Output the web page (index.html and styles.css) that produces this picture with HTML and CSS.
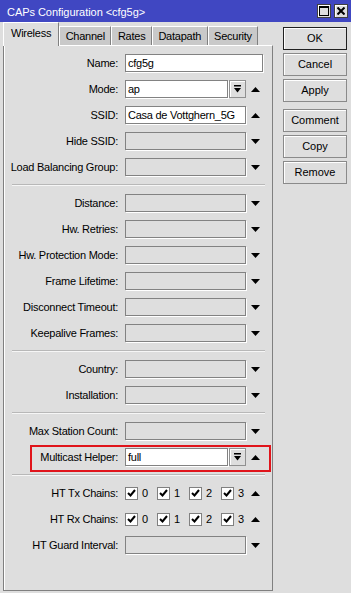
FILE: index.html
```
<!DOCTYPE html>
<html>
<head>
    <title>CAPs Configuration</title>
    <link rel="stylesheet" href="styles.css">
</head>
<body>
    <div class="titlebar">
        <span class="title">CAPs Configuration &lt;cfg5g&gt;</span>
        <div class="winbtns">
            <span class="winbtn"><svg width="10" height="10" viewBox="0 0 10 10"><rect x="0.5" y="0.5" width="9" height="9" fill="none" stroke="#000"/><rect x="0" y="0" width="10" height="2" fill="#000"/></svg></span>
            <span class="winbtn"><svg width="8" height="8" viewBox="0 0 8 8"><path d="M0.5 0.5 L7.5 7.5 M7.5 0.5 L0.5 7.5" stroke="#000" stroke-width="2"/></svg></span>
        </div>
    </div>

    <div class="main">
        <div class="left">
            <div class="tabs">
                <div class="tab active">Wireless</div>
                <div class="tab">Channel</div>
                <div class="tab">Rates</div>
                <div class="tab">Datapath</div>
                <div class="tab">Security</div>
            </div>

            <div class="panel">
                <div class="row"><label>Name:</label><div class="field text wide">cfg5g</div></div>
                <div class="row">
                    <label>Mode:</label><div class="field text short">ap</div>
                    <span class="dropbtn"><svg width="7" height="8" viewBox="0 0 7 8"><rect x="0" y="0" width="7" height="1.5" fill="#000"/><path d="M0 3 H7 L3.5 7.5 Z" fill="#000"/></svg></span>
                    <svg class="arrow" width="9" height="5" viewBox="0 0 9 5"><path d="M0 5 H9 L4.5 0 Z" fill="#000"/></svg>
                </div>
                <div class="row">
                    <label>SSID:</label><div class="field text">Casa de Vottghern_5G</div>
                    <svg class="arrow" width="9" height="5" viewBox="0 0 9 5"><path d="M0 5 H9 L4.5 0 Z" fill="#000"/></svg>
                </div>
                <div class="row">
                    <label>Hide SSID:</label><div class="field"></div>
                    <svg class="arrow" width="9" height="5" viewBox="0 0 9 5"><path d="M0 0 H9 L4.5 5 Z" fill="#000"/></svg>
                </div>
                <div class="row">
                    <label>Load Balancing Group:</label><div class="field"></div>
                    <svg class="arrow" width="9" height="5" viewBox="0 0 9 5"><path d="M0 0 H9 L4.5 5 Z" fill="#000"/></svg>
                </div>

                <div class="sep"></div>

                <div class="row">
                    <label>Distance:</label><div class="field"></div>
                    <svg class="arrow" width="9" height="5" viewBox="0 0 9 5"><path d="M0 0 H9 L4.5 5 Z" fill="#000"/></svg>
                </div>
                <div class="row">
                    <label>Hw. Retries:</label><div class="field"></div>
                    <svg class="arrow" width="9" height="5" viewBox="0 0 9 5"><path d="M0 0 H9 L4.5 5 Z" fill="#000"/></svg>
                </div>
                <div class="row">
                    <label>Hw. Protection Mode:</label><div class="field"></div>
                    <svg class="arrow" width="9" height="5" viewBox="0 0 9 5"><path d="M0 0 H9 L4.5 5 Z" fill="#000"/></svg>
                </div>
                <div class="row">
                    <label>Frame Lifetime:</label><div class="field"></div>
                    <svg class="arrow" width="9" height="5" viewBox="0 0 9 5"><path d="M0 0 H9 L4.5 5 Z" fill="#000"/></svg>
                </div>
                <div class="row">
                    <label>Disconnect Timeout:</label><div class="field"></div>
                    <svg class="arrow" width="9" height="5" viewBox="0 0 9 5"><path d="M0 0 H9 L4.5 5 Z" fill="#000"/></svg>
                </div>
                <div class="row">
                    <label>Keepalive Frames:</label><div class="field"></div>
                    <svg class="arrow" width="9" height="5" viewBox="0 0 9 5"><path d="M0 0 H9 L4.5 5 Z" fill="#000"/></svg>
                </div>

                <div class="sep"></div>

                <div class="row">
                    <label>Country:</label><div class="field"></div>
                    <svg class="arrow" width="9" height="5" viewBox="0 0 9 5"><path d="M0 0 H9 L4.5 5 Z" fill="#000"/></svg>
                </div>
                <div class="row">
                    <label>Installation:</label><div class="field"></div>
                    <svg class="arrow" width="9" height="5" viewBox="0 0 9 5"><path d="M0 0 H9 L4.5 5 Z" fill="#000"/></svg>
                </div>

                <div class="sep"></div>

                <div class="row">
                    <label>Max Station Count:</label><div class="field"></div>
                    <svg class="arrow" width="9" height="5" viewBox="0 0 9 5"><path d="M0 0 H9 L4.5 5 Z" fill="#000"/></svg>
                </div>
                <div class="row marked">
                    <label>Multicast Helper:</label><div class="field text short">full</div>
                    <span class="dropbtn"><svg width="7" height="8" viewBox="0 0 7 8"><rect x="0" y="0" width="7" height="1.5" fill="#000"/><path d="M0 3 H7 L3.5 7.5 Z" fill="#000"/></svg></span>
                    <svg class="arrow" width="9" height="5" viewBox="0 0 9 5"><path d="M0 5 H9 L4.5 0 Z" fill="#000"/></svg>
                </div>

                <div class="sep"></div>

                <div class="row">
                    <label>HT Tx Chains:</label>
                    <div class="checks">
                        <span class="chk"><span class="box"><svg width="9" height="8" viewBox="0 0 9 8"><path d="M1 4 L3.5 6.5 L8 1" fill="none" stroke="#000" stroke-width="2"/></svg></span>0</span>
                        <span class="chk"><span class="box"><svg width="9" height="8" viewBox="0 0 9 8"><path d="M1 4 L3.5 6.5 L8 1" fill="none" stroke="#000" stroke-width="2"/></svg></span>1</span>
                        <span class="chk"><span class="box"><svg width="9" height="8" viewBox="0 0 9 8"><path d="M1 4 L3.5 6.5 L8 1" fill="none" stroke="#000" stroke-width="2"/></svg></span>2</span>
                        <span class="chk"><span class="box"><svg width="9" height="8" viewBox="0 0 9 8"><path d="M1 4 L3.5 6.5 L8 1" fill="none" stroke="#000" stroke-width="2"/></svg></span>3</span>
                    </div>
                    <svg class="arrow" width="9" height="5" viewBox="0 0 9 5"><path d="M0 5 H9 L4.5 0 Z" fill="#000"/></svg>
                </div>
                <div class="row">
                    <label>HT Rx Chains:</label>
                    <div class="checks">
                        <span class="chk"><span class="box"><svg width="9" height="8" viewBox="0 0 9 8"><path d="M1 4 L3.5 6.5 L8 1" fill="none" stroke="#000" stroke-width="2"/></svg></span>0</span>
                        <span class="chk"><span class="box"><svg width="9" height="8" viewBox="0 0 9 8"><path d="M1 4 L3.5 6.5 L8 1" fill="none" stroke="#000" stroke-width="2"/></svg></span>1</span>
                        <span class="chk"><span class="box"><svg width="9" height="8" viewBox="0 0 9 8"><path d="M1 4 L3.5 6.5 L8 1" fill="none" stroke="#000" stroke-width="2"/></svg></span>2</span>
                        <span class="chk"><span class="box"><svg width="9" height="8" viewBox="0 0 9 8"><path d="M1 4 L3.5 6.5 L8 1" fill="none" stroke="#000" stroke-width="2"/></svg></span>3</span>
                    </div>
                    <svg class="arrow" width="9" height="5" viewBox="0 0 9 5"><path d="M0 5 H9 L4.5 0 Z" fill="#000"/></svg>
                </div>
                <div class="row">
                    <label>HT Guard Interval:</label><div class="field"></div>
                    <svg class="arrow" width="9" height="5" viewBox="0 0 9 5"><path d="M0 0 H9 L4.5 5 Z" fill="#000"/></svg>
                </div>
            </div>
        </div>

        <div class="right">
            <div class="btn default">OK</div>
            <div class="btn">Cancel</div>
            <div class="btn">Apply</div>
            <div class="btn spaced">Comment</div>
            <div class="btn">Copy</div>
            <div class="btn">Remove</div>
        </div>
    </div>
</body>
</html>
```

FILE: styles.css
```
body { margin: 0; background: #dedede; font-family: Tahoma, "Liberation Sans", sans-serif; font-size: 11px; color: #000; }

.titlebar { height: 22px; background: #4047c2; color: #fff; display: flex; align-items: center; justify-content: space-between; padding: 0 3px 0 7px; }
.title { padding-top: 2px; letter-spacing: -0.05px; }
.winbtns { display: flex; gap: 3px; }
.winbtn { width: 12px; height: 12px; background: #dedede; border: 1px solid #404040; box-shadow: inset 1px 1px #fff; display: flex; align-items: center; justify-content: center; }

.main { display: flex; padding-top: 1px; }
.left { width: 270px; margin-left: 3px; letter-spacing: -0.25px; }
.right { width: 64px; margin-left: 10px; padding-top: 4px; }

.tabs { display: flex; align-items: flex-end; height: 23px; position: relative; z-index: 1; margin-bottom: -1px; }
.tab { height: 18px; line-height: 18px; padding: 0 5.5px; background: #c9c9c9; border: 1px solid #fff; border-right-color: #808080; border-bottom: none; margin-bottom: 1px; }
.tab.active { height: 23px; line-height: 21px; background: #dedede; margin-bottom: 0; padding: 0 7px; }

.panel { height: 546px; box-sizing: border-box; border: 1px solid #808080; border-top-color: #fff; box-shadow: inset 1px 0 #fff; padding-top: 8px; display: flex; flex-direction: column; gap: 8px; }

.row { display: flex; align-items: center; height: 18px; }
.row label { width: 114px; margin-right: 7px; text-align: right; white-space: nowrap; }
.field { width: 121px; height: 18px; box-sizing: border-box; border: 1px solid #828282; box-shadow: 1px 1px 0 #fff; line-height: 16px; padding-left: 2px; white-space: nowrap; overflow: hidden; }
.field.text { background: #fff; }
.field.wide { width: 138px; }
.field.short { width: 103px; }
.dropbtn { width: 17px; height: 18px; box-sizing: border-box; margin-left: 1px; border: 1px solid #909090; box-shadow: inset 1px 1px #fff; display: flex; align-items: center; justify-content: center; }
.arrow { margin-left: 5px; }

.row.marked { position: relative; }
.row.marked::after { content: ""; position: absolute; left: 26px; right: 1px; top: -3px; bottom: -6px; border: 2px solid #e0141b; }

.sep { height: 0; border-top: 1px solid #b8b8b8; border-bottom: 1px solid #f6f6f6; margin: 0 7px 0 8px; }

.checks { width: 121px; display: flex; }
.chk { width: 32px; display: flex; align-items: center; gap: 4px; }
.chk:last-child { width: auto; }
.box { width: 11px; height: 11px; background: #fff; border: 1px solid #808080; display: flex; align-items: center; justify-content: center; }

.btn { height: 23px; box-sizing: border-box; border: 1px solid #8a8a8a; box-shadow: inset 1px 1px #fff; text-align: center; line-height: 21px; margin-bottom: 3px; }
.btn.default { border-color: #202020; }
.btn.spaced { margin-top: 7px; }
```
